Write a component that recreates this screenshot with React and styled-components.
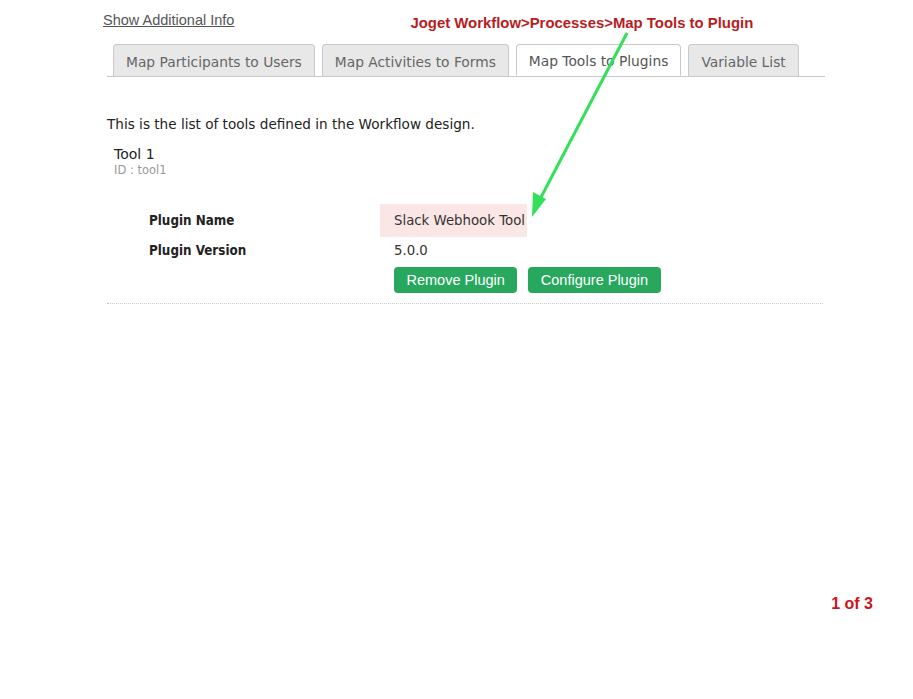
import React from "react";
import styled, { createGlobalStyle } from "styled-components";

const GlobalStyle = createGlobalStyle`
  html, body {
    margin: 0;
    padding: 0;
    background: #ffffff;
  }
  body {
    font-family: "DejaVu Sans", Verdana, sans-serif;
    color: #333;
  }
`;

const Page = styled.div`
  position: relative;
  width: 913px;
  min-height: 699px;
  box-sizing: border-box;
  padding: 10px 0 0 107px;
  display: flex;
  flex-direction: column;
`;

const TopBar = styled.div`
  display: flex;
  align-items: flex-start;
  height: 34px;
`;

const InfoLink = styled.a`
  font-family: "Liberation Sans", Arial, sans-serif;
  font-size: 14.5px;
  color: #555;
  text-decoration: underline;
  margin-left: -4px;
  line-height: 20px;
`;

const Breadcrumb = styled.div`
  font-family: "Liberation Sans", Arial, sans-serif;
  font-weight: bold;
  font-size: 14.9px;
  color: #b81c22;
  margin-left: 176px;
  margin-top: 4px;
  line-height: 18px;
`;

const TabBar = styled.div`
  display: flex;
  gap: 7px;
  width: 718px;
  padding-left: 6px;
  box-sizing: border-box;
  border-bottom: 1px solid #c8c8c8;
`;

const Tab = styled.div`
  height: 32px;
  box-sizing: border-box;
  padding: 2px 12px 0;
  display: flex;
  align-items: center;
  font-size: 13.8px;
  color: ${(p) => (p.active ? "#555" : "#666")};
  background: ${(p) => (p.active ? "#ffffff" : "#e8e8e8")};
  border: 1px solid #c8c8c8;
  border-bottom: ${(p) => (p.active ? "1px solid #fff" : "none")};
  margin-bottom: ${(p) => (p.active ? "-1px" : "0")};
  border-radius: 4px 4px 0 0;
  white-space: nowrap;
`;

const Intro = styled.p`
  margin: 38px 0 0 0;
  font-size: 13.6px;
  color: #222;
  line-height: 18px;
`;

const ToolHead = styled.div`
  margin: 13px 0 0 7px;
  display: flex;
  flex-direction: column;
`;

const ToolName = styled.span`
  font-size: 14px;
  color: #222;
  line-height: 17px;
`;

const ToolId = styled.span`
  font-size: 11.5px;
  color: #999;
  line-height: 15px;
`;

const Details = styled.div`
  margin-top: 26px;
  width: 716px;
  padding-bottom: 10px;
  border-bottom: 1px dotted #c8c8c8;
  display: grid;
  grid-template-columns: 273px auto;
  grid-template-rows: 33px 26px auto;
  align-items: center;
`;

const Label = styled.div`
  padding-left: 42px;
  font-family: "DejaVu Sans Condensed", "DejaVu Sans", sans-serif;
  font-size: 13.3px;
  font-weight: bold;
  color: #222;
`;

const Value = styled.div`
  justify-self: start;
  align-self: ${(p) => (p.highlight ? "stretch" : "center")};
  display: flex;
  align-items: center;
  font-size: 13.3px;
  color: #333;
  padding: ${(p) => (p.highlight ? "0 2px 0 14px" : "0 0 0 14px")};
  background: ${(p) => (p.highlight ? "#fbe6e6" : "transparent")};
`;

const Actions = styled.div`
  grid-column: 2;
  display: flex;
  gap: 11px;
  padding-left: 14px;
  margin-top: 4px;
`;

const GreenButton = styled.button`
  font-family: "Liberation Sans", Arial, sans-serif;
  font-size: 14.5px;
  color: #fff;
  background: #28a85e;
  border: none;
  border-radius: 4px;
  height: 26px;
  padding: 0 12.5px;
  cursor: pointer;
`;

const Pager = styled.div`
  margin-top: auto;
  margin-bottom: 86px;
  align-self: flex-end;
  margin-right: 40px;
  font-family: "Liberation Sans", Arial, sans-serif;
  font-weight: bold;
  font-size: 16px;
  color: #d0121b;
`;

const ArrowLayer = styled.svg`
  position: absolute;
  left: 0;
  top: 0;
  pointer-events: none;
`;

function Arrow() {
  return (
    <ArrowLayer width="913" height="699" viewBox="0 0 913 699">
      <line x1="627" y1="33" x2="538" y2="203" stroke="#33e05a" strokeWidth="3" />
      <polygon points="532,217 533,192 546,199" fill="#33e05a" />
    </ArrowLayer>
  );
}

const tabs = [
  "Map Participants to Users",
  "Map Activities to Forms",
  "Map Tools to Plugins",
  "Variable List",
];

export default function App() {
  return (
    <>
      <GlobalStyle />
      <Page>
        <TopBar>
          <InfoLink href="#">Show Additional Info</InfoLink>
          <Breadcrumb>Joget Workflow&gt;Processes&gt;Map Tools to Plugin</Breadcrumb>
        </TopBar>

        <TabBar>
          {tabs.map((t) => (
            <Tab key={t} active={t === "Map Tools to Plugins"}>
              {t}
            </Tab>
          ))}
        </TabBar>

        <Intro>This is the list of tools defined in the Workflow design.</Intro>

        <ToolHead>
          <ToolName>Tool 1</ToolName>
          <ToolId>ID : tool1</ToolId>
        </ToolHead>

        <Details>
          <Label>Plugin Name</Label>
          <Value highlight>Slack Webhook Tool</Value>
          <Label>Plugin Version</Label>
          <Value>5.0.0</Value>
          <Actions>
            <GreenButton>Remove Plugin</GreenButton>
            <GreenButton>Configure Plugin</GreenButton>
          </Actions>
        </Details>

        <Pager>1 of 3</Pager>
        <Arrow />
      </Page>
    </>
  );
}
